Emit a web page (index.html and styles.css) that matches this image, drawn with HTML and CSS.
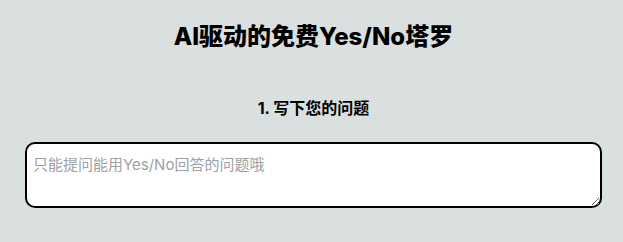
FILE: index.html
```html
<!DOCTYPE html>
<html lang="zh-CN">
<head>
    <meta charset="UTF-8">
    <meta name="viewport" content="width=device-width, initial-scale=1.0">
    <title>AI驱动的免费Yes/No塔罗</title>
    <link rel="stylesheet" href="styles.css">
</head>
<body>
    <div class="page">
        <h1 class="title">AI驱动的免费Yes/No塔罗</h1>
        <h3 class="step">1. 写下您的问题</h3>
        <textarea class="question" placeholder="只能提问能用Yes/No回答的问题哦"></textarea>
    </div>
</body>
</html>
```

FILE: styles.css
```css
body {
    margin: 0;
    background: #dadfe0;
    font-family: Inter, "Noto Sans CJK SC", sans-serif;
    color: #000;
}
.page {
    padding: 21px 21px 20px 25px;
}
.title {
    margin: 0;
    text-align: center;
    font-size: 24px;
    font-weight: 800;
    line-height: 32px;
}
.step {
    margin: 44px 0 0;
    text-align: center;
    font-size: 16px;
    font-weight: 700;
    line-height: 22px;
}
.question {
    display: block;
    box-sizing: border-box;
    width: 100%;
    height: 66px;
    margin-top: 23px;
    padding: 9px 6px;
    border: 2px solid #000;
    border-radius: 10px;
    background: #fff;
    font-family: Inter, "Noto Sans CJK SC", sans-serif;
    font-size: 15px;
    resize: vertical;
}
.question::placeholder {
    color: #9ca0a8;
}
```
